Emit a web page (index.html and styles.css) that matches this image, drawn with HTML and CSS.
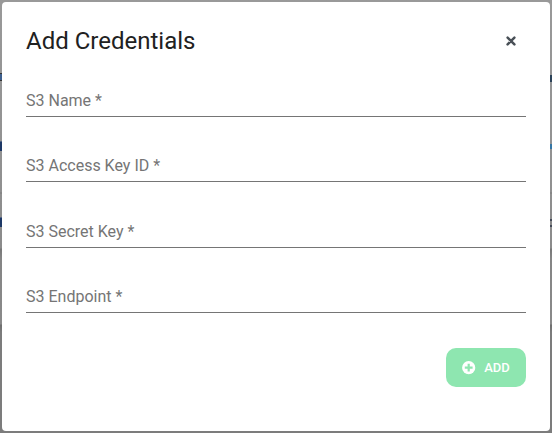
FILE: index.html
```
<!DOCTYPE html>
<html lang="en">
<head>
<meta charset="utf-8">
<title>Add Credentials</title>
<link rel="stylesheet" href="styles.css">
</head>
<body>
<div class="backdrop">
  <i class="mark mark-l mark-1"></i><i class="mark mark-l mark-2"></i><i class="mark mark-l mark-3"></i>
  <i class="mark mark-r mark-4"></i><i class="mark mark-r mark-5"></i><i class="mark mark-r mark-6"></i>
  <form class="dialog">
    <header class="head">
      <h1 class="title">Add Credentials</h1>
      <button class="close" type="button" aria-label="Close">
        <svg width="10" height="10" viewBox="0 0 10 10"><path d="M1.6 1.6 8.4 8.4M8.4 1.6 1.6 8.4" fill="none" stroke="#495057" stroke-width="2.5" stroke-linecap="round"/></svg>
      </button>
    </header>
    <div class="fields">
      <div class="field">S3 Name *</div>
      <div class="field">S3 Access Key ID *</div>
      <div class="field field-shift">S3 Secret Key *</div>
      <div class="field">S3 Endpoint *</div>
    </div>
    <footer class="actions">
      <button class="add" type="button">
        <svg width="14" height="14" viewBox="0 0 14 14"><circle cx="6.7" cy="6.7" r="6.6" fill="#fff"/><path d="M6.7 2.8v7.8M2.8 6.7h7.8" stroke="#8ee6b0" stroke-width="2.2"/></svg>
        <span>ADD</span>
      </button>
    </footer>
  </form>
</div>
</body>
</html>
```
FILE: styles.css
```
* { box-sizing: border-box; }
body { margin: 0; font-family: Roboto, sans-serif; }
.backdrop {
  position: relative;
  width: 552px;
  height: 433px;
  padding: 2px;
  background: linear-gradient(#999 0, #909090 192px, #7c7c7c 193px, #8f8f8f 194px, #8b8b8b 248px, #777 249px, #858585 258px, #8a8a8a 324px, #6e6e6e 325px, #7c7c7c 332px, #7c7c7c 100%);
}
.dialog {
  position: relative;
  display: flex;
  flex-direction: column;
  width: 548px;
  height: 429px;
  padding: 24px;
  border-radius: 4px;
  background: #fff;
}
.head { display: flex; align-items: center; justify-content: space-between; height: 30px; }
.title { margin: 0; color: #212121; font-size: 24px; font-weight: 400; line-height: 30px; }
button { border: 0; padding: 0; font-family: inherit; }
.close { display: flex; margin-right: 10px; background: none; }
.fields { display: flex; flex-direction: column; gap: 35px; padding-top: 31px; }
.field {
  height: 30px;
  border-bottom: 1px solid #757575;
  color: #757575;
  font-size: 16px;
  line-height: 27px;
}
.field-shift { margin-top: 1px; }
.actions { display: flex; justify-content: flex-end; padding-top: 35px; }
.add {
  display: flex;
  align-items: center;
  justify-content: center;
  gap: 8px;
  width: 80px;
  height: 39px;
  border-radius: 10px;
  background: #8ee6b0;
  color: #fff;
  font-size: 13px;
  font-weight: 500;
}
.mark { position: absolute; width: 2px; background: #1d3866; }
.mark-l { left: 0; }
.mark-r { right: 0; }
.mark-1 { top: 73px; height: 8px; border-top: 1px solid #333; border-bottom: 1px solid #333; background: #3d5f8d; }
.mark-2 { top: 141px; height: 10px; border-top: 1px solid #526482; }
.mark-3 { top: 217px; height: 10px; border-top: 1px solid #526482; }
.mark-4 { top: 75px; height: 7px; background: #2b4258; }
.mark-5 { top: 144px; height: 5px; background: #3676a4; }
.mark-6 { top: 219px; height: 8px; border: solid #444a58; border-width: 2px 0; background: #888; }
```
